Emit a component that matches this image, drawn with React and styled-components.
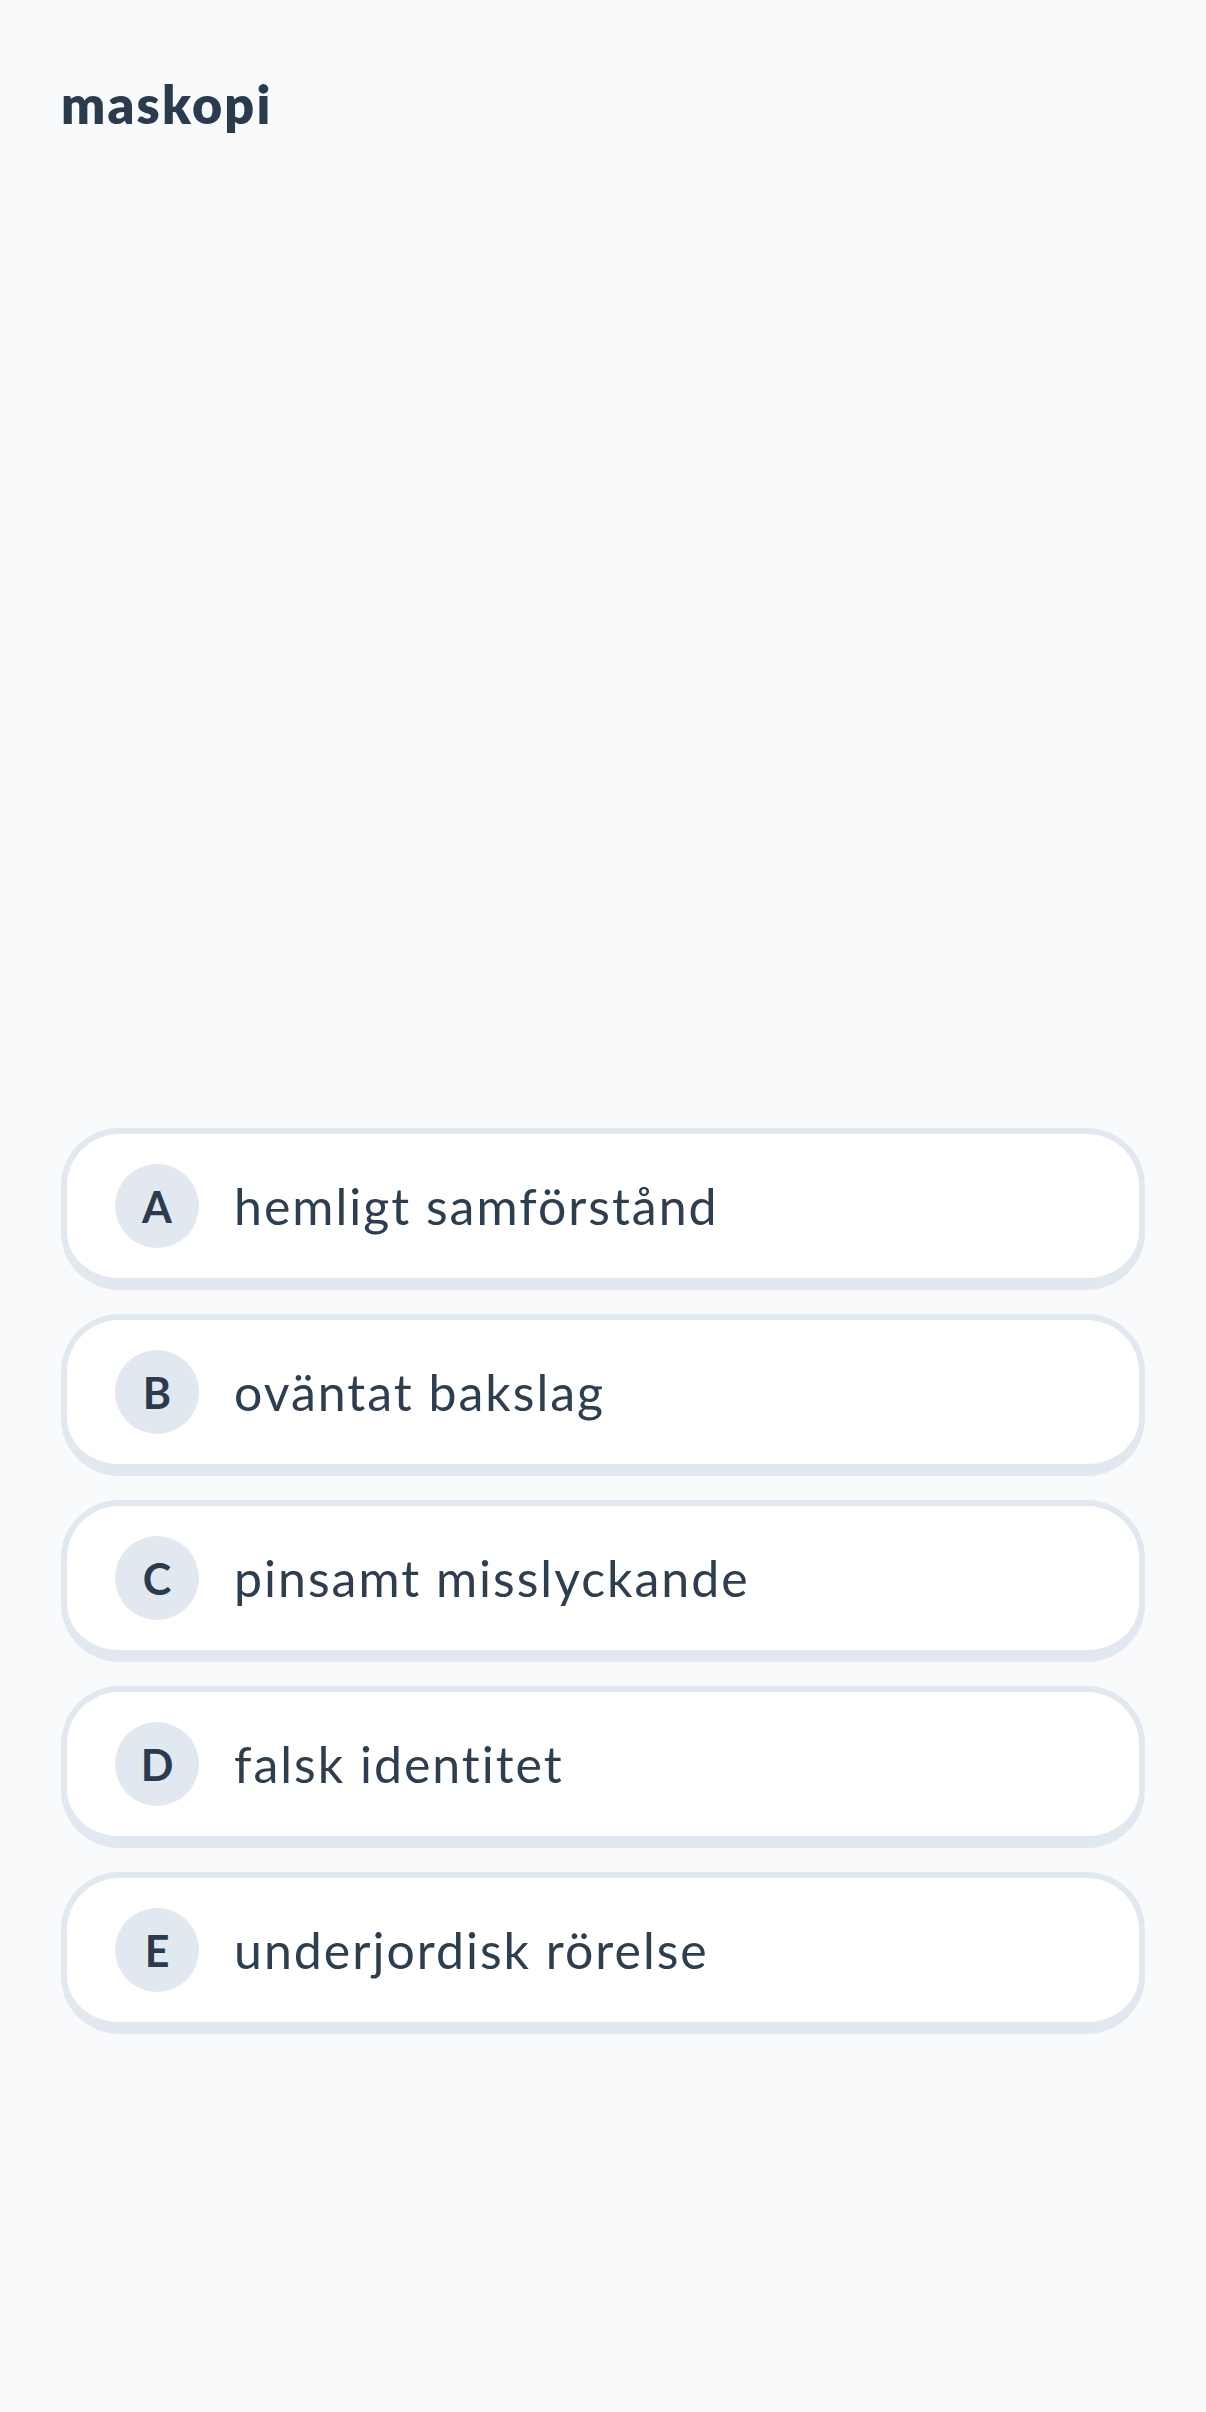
import React from "react";
import styled, { createGlobalStyle } from "styled-components";

const options = [
  { letter: "A", text: "hemligt samförstånd" },
  { letter: "B", text: "oväntat bakslag" },
  { letter: "C", text: "pinsamt misslyckande" },
  { letter: "D", text: "falsk identitet" },
  { letter: "E", text: "underjordisk rörelse" },
];

const App = () => {
  return (
    <>
      <GlobalStyle />
      <Page>
        <Header>
          <Title>maskopi</Title>
        </Header>
        <QuestionArea />
        <OptionList>
          {options.map((option) => (
            <Option key={option.letter}>
              <Badge>{option.letter}</Badge>
              <OptionText>{option.text}</OptionText>
            </Option>
          ))}
        </OptionList>
      </Page>
    </>
  );
};

const GlobalStyle = createGlobalStyle`
  body {
    margin: 0;
    background: #f8fafc;
    font-family: Lato, "Noto Sans", sans-serif;
    color: #2d3e50;
  }
`;

const Page = styled.div`
  min-height: 100vh;
  box-sizing: border-box;
  display: flex;
  flex-direction: column;
  padding: 0 61px 378px;
`;

const Header = styled.header`
  padding-top: 74px;
`;

const Title = styled.h1`
  margin: 0;
  font-family: Lato, sans-serif;
  font-size: 52px;
  line-height: 60px;
  font-weight: 800;
  letter-spacing: 2.2px;
  color: #2b3b4e;
`;

const QuestionArea = styled.div`
  flex: 1;
`;

const OptionList = styled.div`
  display: flex;
  flex-direction: column;
  gap: 24px;
`;

const Option = styled.button`
  display: flex;
  align-items: center;
  gap: 35px;
  height: 162px;
  box-sizing: border-box;
  padding: 0 48px;
  background: #ffffff;
  border: 6px solid #e2e8f0;
  border-bottom-width: 12px;
  border-radius: 58px;
  font-family: inherit;
  cursor: pointer;
  text-align: left;
`;

const Badge = styled.span`
  flex: none;
  width: 84px;
  height: 84px;
  border-radius: 50%;
  background: #e2e8f0;
  display: flex;
  align-items: center;
  justify-content: center;
  font-size: 43px;
  font-weight: 700;
  color: #2b3b4e;
`;

const OptionText = styled.span`
  font-size: 50px;
  font-weight: 400;
  letter-spacing: 2px;
  color: #2d3e50;
`;

export default App;
